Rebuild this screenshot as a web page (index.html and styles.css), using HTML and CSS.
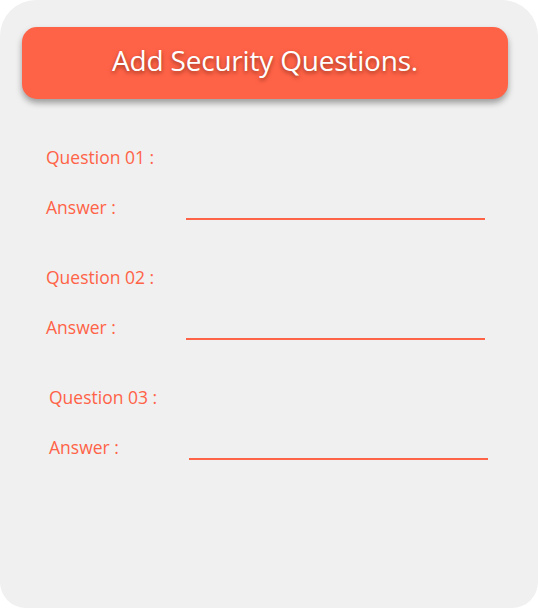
FILE: index.html
```html
<!DOCTYPE html>
<html>
<head>
<meta charset="utf-8">
<link rel="stylesheet" href="styles.css">
</head>
<body>
<div class="card">
  <div class="header">Add Security Questions.</div>
  <div class="group">
    <div class="q">Question 01 :</div>
    <div class="a"><span class="label">Answer :</span><span class="line"></span></div>
  </div>
  <div class="group">
    <div class="q">Question 02 :</div>
    <div class="a"><span class="label">Answer :</span><span class="line"></span></div>
  </div>
  <div class="group shift">
    <div class="q">Question 03 :</div>
    <div class="a"><span class="label">Answer :</span><span class="line"></span></div>
  </div>
</div>
</body>
</html>
```
FILE: styles.css
```css
html, body { margin: 0; padding: 0; background: #ffffff; }
body { font-family: "Open Sans", "Noto Sans", sans-serif; }
.card {
  width: 538px;
  height: 608px;
  box-sizing: border-box;
  background: #f0f0f0;
  border-radius: 36px 36px 26px 26px;
  padding: 27px 30px 0 22px;
}
.header {
  height: 72px;
  box-sizing: border-box;
  padding-bottom: 6px;
  background: #ff6347;
  border-radius: 15px;
  box-shadow: 0 4px 6px rgba(0,0,0,0.35);
  color: #fff;
  font-family: "Open Sans", sans-serif;
  font-size: 28px;
  letter-spacing: -0.2px;
  display: flex;
  align-items: center;
  justify-content: center;
  text-shadow: 0 2px 4px rgba(80,20,0,0.6);
}
.group { padding-left: 24px; margin-top: 47px; color: #ff6347; font-size: 17.5px; }
.group + .group { margin-top: 46px; }
.group.shift { padding-left: 27px; }
.q { height: 22px; line-height: 22px; }
.a { display: flex; align-items: flex-start; margin-top: 28px; height: 24px; }
.label { width: 140px; line-height: 22px; }
.line { width: 299px; height: 2px; background: #ff6347; margin-top: 22px; }
```
